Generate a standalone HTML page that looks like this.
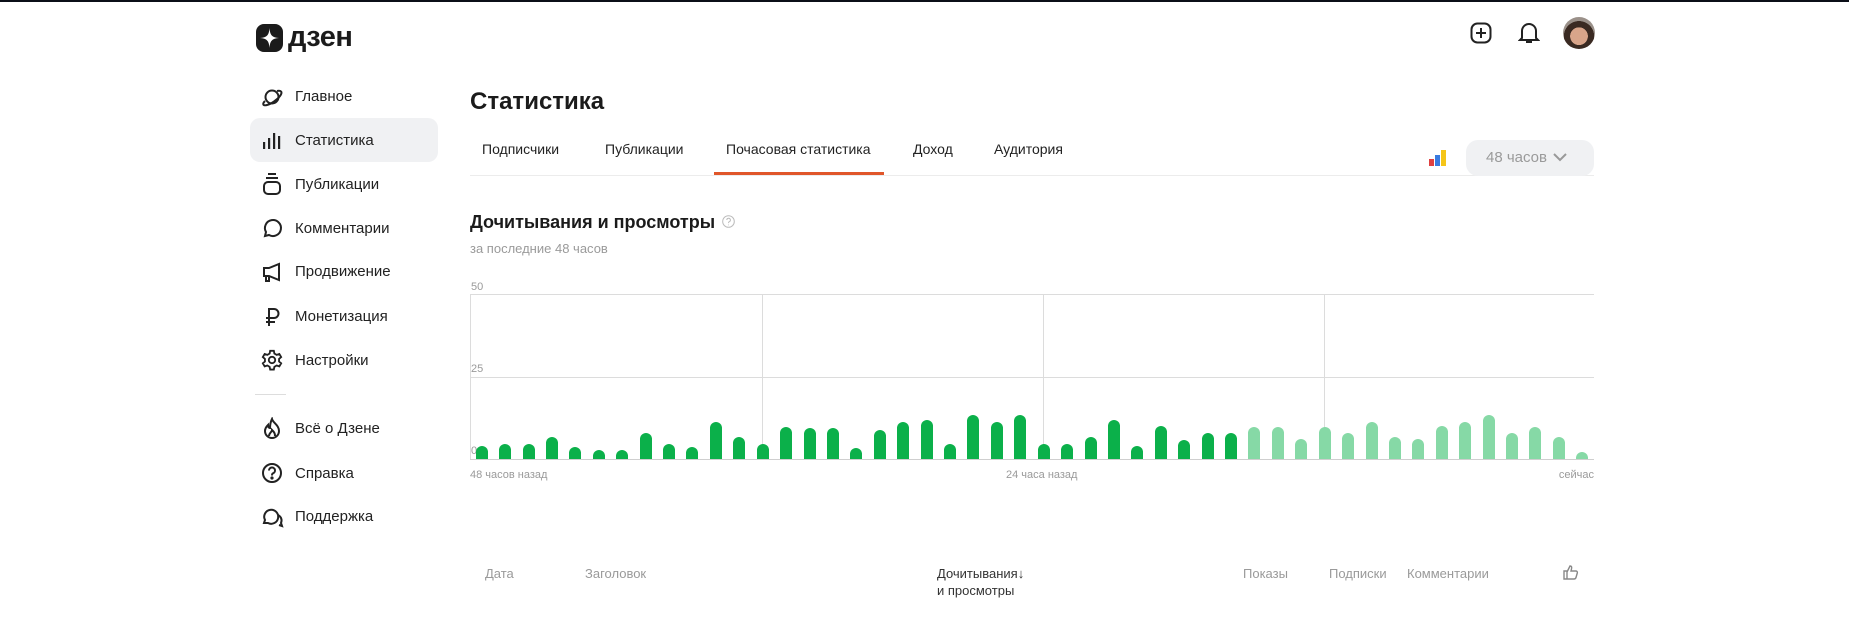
<!DOCTYPE html>
<html><head><meta charset="utf-8"><style>
*{margin:0;padding:0;box-sizing:border-box}
body{width:1849px;height:617px;overflow:hidden;background:#fff;font-family:"Liberation Sans","Noto Sans CJK SC",sans-serif;color:#1f1f1f;position:relative}
.a{position:absolute;white-space:nowrap}
.nav{font-size:15px;color:#222;left:295px}
.ic{position:absolute;left:261px}
.tab{top:141px;font-size:14px;color:#222}
.g{color:#9a9a9a}
.bars{position:absolute;left:470px;top:294px;width:1124px;height:165px;display:grid;grid-template-columns:repeat(48,1fr);align-items:end;justify-items:center}
.bars div{width:12px;background:#0bb04a;border-radius:6px 6px 0 0}
.bars div.l{background:#86d9a6}
.th{font-size:13px;color:#9a9a9a;top:566px}
</style></head><body>
<div class="a" style="left:0;top:0;width:1849px;height:2px;background:#0b0f18"></div>

<svg class="a" style="left:256px;top:24px" width="27" height="28" viewBox="0 0 27 28"><rect width="27" height="28" rx="8" fill="#1b1b1b"/><path d="M13.5 4 C14 11 16 13.5 23 14 C16 14.5 14 17 13.5 24 C13 17 11 14.5 4 14 C11 13.5 13 11 13.5 4Z" fill="#fff"/></svg>
<div class="a" style="left:288px;top:21px;font-size:29px;font-weight:bold;letter-spacing:-0.5px;color:#1b1b1b">дзен</div>

<svg class="a" style="left:1470px;top:22px" width="22" height="22" viewBox="0 0 22 22" fill="none" stroke="#222" stroke-width="2"><rect x="1.5" y="1.5" width="19" height="19" rx="6"/><path d="M11 6v10M6 11h10"/></svg>
<svg class="a" style="left:1518px;top:21px" width="22" height="24" viewBox="0 0 22 24" fill="none" stroke="#222" stroke-width="2"><path d="M4 17V10a7 7 0 0 1 14 0v7l2 2H2z"/><path d="M8 21h6"/></svg>
<div class="a" style="left:1563px;top:17px;width:32px;height:32px;border-radius:50%;background:radial-gradient(circle at 50% 60%,#d9a58a 0 35%,#3a2a22 36% 60%,#9a9089 61%)"></div>

<div class="a" style="left:250px;top:118px;width:188px;height:44px;border-radius:10px;background:#f0f1f3"></div>
<svg class="ic" style="top:87px" width="22" height="20" viewBox="0 0 22 20" fill="none" stroke="#222" stroke-width="2"><ellipse cx="11" cy="10" rx="6.5" ry="6.5"/><path d="M4 14c-3 3-2 5 2 4s10-5 13-9 1-6-3-5"/></svg>
<div class="a nav" style="top:88px">Главное</div>
<svg class="ic" style="top:130px" width="22" height="20" viewBox="0 0 22 20" fill="#222"><rect x="2" y="12" width="2.2" height="7"/><rect x="7" y="8" width="2.2" height="11"/><rect x="12" y="3" width="2.2" height="16"/><rect x="17" y="6" width="2.2" height="13"/></svg>
<div class="a nav" style="top:132px">Статистика</div>
<svg class="ic" style="top:172px" width="22" height="24" viewBox="0 0 22 24" fill="none" stroke="#222" stroke-width="2"><path d="M7 2h8M5 6h12"/><rect x="3" y="10" width="16" height="12" rx="4"/></svg>
<div class="a nav" style="top:176px">Публикации</div>
<svg class="ic" style="top:217px" width="22" height="22" viewBox="0 0 22 22" fill="none" stroke="#222" stroke-width="2"><path d="M4 19l1-4a8 8 0 1 1 3 3z"/></svg>
<div class="a nav" style="top:220px">Комментарии</div>
<svg class="ic" style="top:261px" width="22" height="22" viewBox="0 0 22 22" fill="none" stroke="#222" stroke-width="2"><path d="M3 7h5l10-4v16L8 15H3z"/><path d="M5 15v5h3v-5"/></svg>
<div class="a nav" style="top:263px">Продвижение</div>
<svg class="ic" style="top:306px" width="22" height="22" viewBox="0 0 22 22" fill="none" stroke="#222" stroke-width="2"><path d="M8 20V3h5a4.5 4.5 0 0 1 0 9H5M5 16h9"/></svg>
<div class="a nav" style="top:308px">Монетизация</div>
<svg class="ic" style="top:349px" width="22" height="22" viewBox="0 0 24 24" fill="none" stroke="#222" stroke-width="2"><circle cx="12" cy="12" r="3.5"/><path d="M10 2h4l.6 3 2.5 1.4 2.9-1 2 3.4-2.3 2v2.8l2.3 2-2 3.4-2.9-1-2.5 1.4-.6 3h-4l-.6-3-2.5-1.4-2.9 1-2-3.4 2.3-2v-2.8l-2.3-2 2-3.4 2.9 1L9.4 5z"/></svg>
<div class="a nav" style="top:352px">Настройки</div>
<div class="a" style="left:255px;top:394px;width:31px;height:1px;background:#ddd"></div>
<svg class="ic" style="top:417px" width="22" height="22" viewBox="0 0 22 22" fill="none" stroke="#222" stroke-width="2"><path d="M11 2c1 4 7 6 7 12a7 7 0 0 1-14 0c0-3 2-5 3-6 0 2 1 3 2 3 0-4 1-7 2-9z"/><path d="M8 19c0-3 3-4 3-6 2 2 3 3 3 6"/></svg>
<div class="a nav" style="top:420px">Всё о Дзене</div>
<svg class="ic" style="top:462px" width="22" height="22" viewBox="0 0 22 22" fill="none" stroke="#222" stroke-width="2"><circle cx="11" cy="11" r="9"/><path d="M8 8.5a3 3 0 1 1 4 2.8c-1 .4-1 1-1 2.2"/><circle cx="11" cy="16" r=".6" fill="#222"/></svg>
<div class="a nav" style="top:465px">Справка</div>
<svg class="ic" style="top:506px" width="24" height="22" viewBox="0 0 24 22" fill="none" stroke="#222" stroke-width="2"><path d="M3 17l1-3a7 7 0 1 1 3 3z"/><path d="M17 9a6 6 0 0 1 3 8l1 3-3-1"/></svg>
<div class="a nav" style="top:508px">Поддержка</div>

<div class="a" style="left:470px;top:88px;font-size:24px;font-weight:bold;color:#1b1b1b">Статистика</div>
<div class="a tab" style="left:482px">Подписчики</div>
<div class="a tab" style="left:605px">Публикации</div>
<div class="a tab" style="left:726px">Почасовая статистика</div>
<div class="a tab" style="left:913px">Доход</div>
<div class="a tab" style="left:994px">Аудитория</div>
<div class="a" style="left:470px;top:175px;width:1124px;height:1px;background:#ececec"></div>
<div class="a" style="left:714px;top:172px;width:170px;height:3px;background:#e0562a"></div>
<svg class="a" style="left:1429px;top:149px" width="18" height="17"><rect x="0" y="10" width="5" height="7" fill="#e04040"/><rect x="6" y="6" width="5" height="11" fill="#3a7be0"/><rect x="12" y="1" width="5" height="16" fill="#f5c518"/></svg>
<div class="a" style="left:1466px;top:140px;width:128px;height:36px;border-radius:12px;background:#f0f1f3"></div>
<div class="a g" style="left:1486px;top:149px;font-size:15px">48 часов</div>
<svg class="a" style="left:1553px;top:152px" width="14" height="10" fill="none" stroke="#999" stroke-width="2"><path d="M1 2l6 6 6-6"/></svg>

<div class="a" style="left:470px;top:212px;font-size:18px;font-weight:bold;color:#1b1b1b">Дочитывания и просмотры</div>
<svg class="a" style="left:722px;top:215px" width="13" height="13" fill="none" stroke="#bbb" stroke-width="1"><circle cx="6.5" cy="6.5" r="5.8"/><path d="M4.8 5a1.8 1.8 0 1 1 2.4 1.7c-.6.3-.7.6-.7 1.4M6.5 9.6v.6"/></svg>
<div class="a g" style="left:470px;top:241px;font-size:13px">за последние 48 часов</div>

<div class="a g" style="left:471px;top:281px;font-size:11px">50</div>
<div class="a g" style="left:471px;top:363px;font-size:11px">25</div>
<div class="a g" style="left:471px;top:445px;font-size:11px">0</div>
<div class="a" style="left:470px;top:294px;width:1124px;height:1px;background:#dcdcdc"></div>
<div class="a" style="left:470px;top:377px;width:1124px;height:1px;background:#dcdcdc"></div>
<div class="a" style="left:470px;top:459px;width:1124px;height:1px;background:#cfcfcf"></div>
<div class="a" style="left:470px;top:294px;width:1px;height:165px;background:#dcdcdc"></div>
<div class="a" style="left:762px;top:294px;width:1px;height:165px;background:#dcdcdc"></div>
<div class="a" style="left:1043px;top:294px;width:1px;height:165px;background:#dcdcdc"></div>
<div class="a" style="left:1324px;top:294px;width:1px;height:165px;background:#dcdcdc"></div>
<div class="bars">
<div style="height:13px"></div><div style="height:15px"></div><div style="height:15px"></div><div style="height:22px"></div><div style="height:12px"></div><div style="height:9px"></div><div style="height:9px"></div><div style="height:26px"></div><div style="height:15px"></div><div style="height:12px"></div><div style="height:37px"></div><div style="height:22px"></div><div style="height:15px"></div><div style="height:32px"></div><div style="height:31px"></div><div style="height:31px"></div><div style="height:11px"></div><div style="height:29px"></div><div style="height:37px"></div><div style="height:39px"></div><div style="height:15px"></div><div style="height:44px"></div><div style="height:37px"></div><div style="height:44px"></div><div style="height:15px"></div><div style="height:15px"></div><div style="height:22px"></div><div style="height:39px"></div><div style="height:13px"></div><div style="height:33px"></div><div style="height:19px"></div><div style="height:26px"></div><div style="height:26px"></div>
<div class="l" style="height:32px"></div><div class="l" style="height:32px"></div><div class="l" style="height:20px"></div><div class="l" style="height:32px"></div><div class="l" style="height:26px"></div><div class="l" style="height:37px"></div><div class="l" style="height:22px"></div><div class="l" style="height:20px"></div><div class="l" style="height:33px"></div><div class="l" style="height:37px"></div><div class="l" style="height:44px"></div><div class="l" style="height:26px"></div><div class="l" style="height:32px"></div><div class="l" style="height:22px"></div><div class="l" style="height:7px"></div>
</div>
<div class="a g" style="left:470px;top:469px;font-size:11px">48 часов назад</div>
<div class="a g" style="left:1006px;top:469px;font-size:11px">24 часа назад</div>
<div class="a g" style="right:255px;top:469px;font-size:11px">сейчас</div>

<div class="a th" style="left:485px">Дата</div>
<div class="a th" style="left:585px">Заголовок</div>
<div class="a th" style="left:937px;color:#333;line-height:17px;top:565px">Дочитывания↓<br>и просмотры</div>
<div class="a th" style="left:1243px">Показы</div>
<div class="a th" style="left:1329px">Подписки</div>
<div class="a th" style="left:1407px">Комментарии</div>
<svg class="a" style="left:1563px;top:564px" width="16" height="16" fill="none" stroke="#888" stroke-width="1.4"><path d="M1 7h3v8H1zM4 8l3-6c1.5 0 2 1 1.5 3L8 7h5c1 0 1.6 1 1.3 2l-1.3 4.5c-.3 1-1 1.5-2 1.5H4"/></svg>
</body></html>
